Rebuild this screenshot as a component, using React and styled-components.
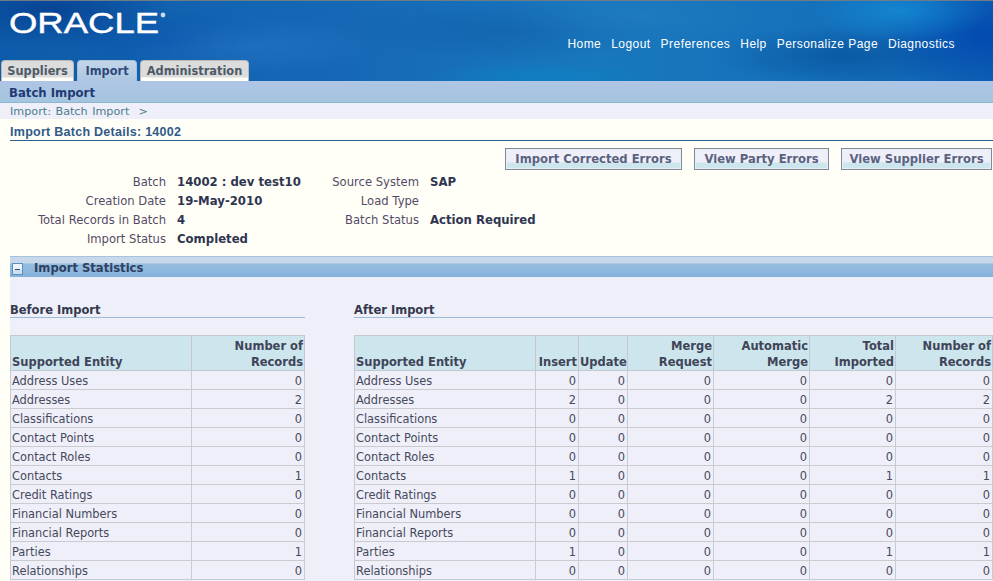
import React from "react";
import styled, { createGlobalStyle } from "styled-components";

const NAV = ["Home", "Logout", "Preferences", "Help", "Personalize Page", "Diagnostics"];
const TABS = [
    { label: "Suppliers", width: 73 },
    { label: "Import", width: 60 },
    { label: "Administration", width: 109 },
];
const ACTIONS = [
    { label: "Import Corrected Errors", width: 177 },
    { label: "View Party Errors", width: 135 },
    { label: "View Supplier Errors", width: 151 },
];
const FORM_LEFT = [
    ["Batch", "14002 : dev test10"],
    ["Creation Date", "19-May-2010"],
    ["Total Records in Batch", "4"],
    ["Import Status", "Completed"],
];
const FORM_RIGHT = [
    ["Source System", "SAP"],
    ["Load Type", ""],
    ["Batch Status", "Action Required"],
];
const ROWS = [
    ["Address Uses", 0, 0, 0, 0, 0, 0],
    ["Addresses", 2, 2, 0, 0, 0, 2, 2],
    ["Classifications", 0, 0, 0, 0, 0, 0, 0],
    ["Contact Points", 0, 0, 0, 0, 0, 0, 0],
    ["Contact Roles", 0, 0, 0, 0, 0, 0, 0],
    ["Contacts", 1, 1, 0, 0, 0, 1, 1],
    ["Credit Ratings", 0, 0, 0, 0, 0, 0, 0],
    ["Financial Numbers", 0, 0, 0, 0, 0, 0, 0],
    ["Financial Reports", 0, 0, 0, 0, 0, 0, 0],
    ["Parties", 1, 1, 0, 0, 0, 1, 1],
    ["Relationships", 0, 0, 0, 0, 0, 0, 0],
];
const AFTER_COLS = [
    { title: "Insert", width: 43 },
    { title: "Update", width: 49 },
    { title: ["Merge", "Request"], width: 86 },
    { title: ["Automatic", "Merge"], width: 96 },
    { title: ["Total", "Imported"], width: 86 },
    { title: ["Number of", "Records"], width: 97 },
];

const GlobalStyle = createGlobalStyle`
    html, body {
        margin: 0;
        height: 581px;
        overflow: hidden;
        background: #fffff8;
    }
    body {
        font-family: "DejaVu Sans", "Liberation Sans", sans-serif;
    }
`;

const Page = styled.div`
    width: 993px;
    height: 581px;
    overflow: hidden;
`;

const Header = styled.header`
    height: 81px;
    box-sizing: border-box;
    border-top: 1px solid #6f7b86;
    display: flex;
    flex-direction: column;
    background:
        radial-gradient(ellipse 120px 40px at 50px 8px, rgba(6, 60, 140, 0.75), transparent),
        radial-gradient(ellipse 130px 30px at 250px 45px, rgba(40, 120, 200, 0.55), transparent),
        radial-gradient(ellipse 120px 28px at 170px 38px, rgba(8, 80, 170, 0.6), transparent),
        radial-gradient(ellipse 90px 30px at 900px 10px, rgba(20, 140, 215, 0.8), transparent),
        radial-gradient(ellipse 110px 60px at 985px 35px, rgba(0, 70, 175, 0.85), transparent),
        radial-gradient(ellipse 130px 30px at 840px 55px, rgba(8, 85, 160, 0.8), transparent),
        radial-gradient(ellipse 120px 16px at 540px 76px, rgba(14, 130, 195, 0.8), transparent),
        radial-gradient(ellipse 130px 30px at 640px 15px, rgba(35, 125, 190, 0.6), transparent),
        radial-gradient(ellipse 170px 30px at 500px 30px, rgba(15, 90, 165, 0.45), transparent),
        linear-gradient(90deg, #0d5cab 0%, #1668b6 35%, #1877bd 60%, #1672bb 80%, #0f63b4 100%);
`;

const BrandRow = styled.div`
    display: flex;
    justify-content: space-between;
    flex: 1;
`;

const Logo = styled.svg`
    width: 160px;
    height: 36px;
    margin: 5px 0 0 9px;
`;

const Nav = styled.nav`
    display: flex;
    gap: 10px;
    margin: 35px 38px 0 0;
`;

const NavLink = styled.a`
    color: #fff;
    font: 12px/17px "Liberation Sans", Arial, sans-serif;
    letter-spacing: 0.45px;
`;

const TabRow = styled.div`
    display: flex;
    gap: 3px;
    padding-left: 1px;
    height: 21px;
`;

const Tab = styled.div`
    box-sizing: border-box;
    width: ${(p) => p.$width}px;
    height: 21px;
    padding-top: 3px;
    text-align: center;
    border: 1px solid ${(p) => (p.$active ? "#a9c0dc" : "#b9b9b9")};
    border-bottom: none;
    border-radius: 4px 4px 0 0;
    font-size: 11.4px;
    line-height: 15px;
    font-weight: bold;
    color: ${(p) => (p.$active ? "#2f4a78" : "#4e5a66")};
    background: ${(p) =>
        p.$active
            ? "linear-gradient(#c4d6e8, #aec6e2)"
            : "linear-gradient(#dcdcdc 0, #dcdcdc 16px, #fffff8 17px)"};
`;

const SectionBand = styled.div`
    height: 22px;
    box-sizing: border-box;
    padding: 5px 9px 0;
    font-size: 11.7px;
    line-height: 14px;
    font-weight: bold;
    color: #1f3a73;
    background: linear-gradient(#afc5e6, #a5c5de);
    border-bottom: 1px solid #8fb6cf;
`;

const Crumbs = styled.div`
    height: 16px;
    padding-left: 10px;
    background: #eeeff8;
    font-size: 11.2px;
    line-height: 18px;
    color: #4f7d8f;
    word-spacing: 1px;
`;

const Content = styled.div`
    padding-left: 10px;
`;

const PageTitle = styled.h1`
    margin: 0;
    height: 22px;
    box-sizing: border-box;
    padding-top: 6px;
    font: bold 12.5px/15px "Liberation Sans", Arial, sans-serif;
    letter-spacing: 0.27px;
    color: #2f5a88;
    border-bottom: 1px solid #2f5f8f;
`;

const Actions = styled.div`
    display: flex;
    justify-content: flex-end;
    gap: 12px;
    padding: 7px 1px 0 0;
`;

const ActionButton = styled.button`
    width: ${(p) => p.$width}px;
    height: 22px;
    padding: 0;
    border: 1px solid #808b9a;
    background: linear-gradient(#eeeff8 0, #eeeff8 13px, #cde5ed 14px);
    box-shadow: inset 0 0 0 1px #e9eef4;
    font-family: inherit;
    font-size: 11.6px;
    font-weight: bold;
    color: #5a6280;
`;

const Form = styled.div`
    display: flex;
    margin: 3px 0 0 -10px;
`;

const FormColumn = styled.dl`
    display: grid;
    grid-template-columns: ${(p) => p.$label}px ${(p) => p.$value};
    grid-auto-rows: 19px;
    column-gap: 11px;
    margin: 0;
`;

const FormLabel = styled.dt`
    font-size: 11.6px;
    line-height: 19px;
    text-align: right;
    color: #554a66;
    white-space: nowrap;
`;

const FormValue = styled.dd`
    margin: 0;
    font-size: 11.7px;
    line-height: 19px;
    font-weight: bold;
    color: #2f3550;
    white-space: nowrap;
`;

const StatsBar = styled.div`
    display: flex;
    align-items: flex-end;
    gap: 11px;
    height: 21px;
    margin-top: 7px;
    padding: 0 0 1px 2px;
    box-sizing: border-box;
    font-size: 11.6px;
    line-height: 15px;
    font-weight: bold;
    color: #2f4060;
    border-top: 1px solid #a8c4dc;
    background: linear-gradient(#c6d8e9 0, #c6d8e9 6px, #95bde0 7px, #85b2da 20px);

    svg {
        margin-bottom: 1px;
    }
`;

const StatsBody = styled.div`
    display: flex;
    gap: 49px;
    height: 304px;
    background: #eeeff8;
`;

const TableBlock = styled.section`
    flex: none;
    width: ${(p) => p.$width}px;
    padding-top: 25px;
`;

const BlockTitle = styled.h2`
    margin: 0 0 17px;
    height: 15px;
    font-size: 11.5px;
    line-height: 16px;
    font-weight: bold;
    color: #33384c;
    border-bottom: 1px solid #9dbbd6;
`;

const Table = styled.table`
    border-collapse: collapse;
    table-layout: fixed;
    width: 100%;
    font-size: 11.4px;
`;

const Th = styled.th`
    height: 35px;
    box-sizing: border-box;
    padding: 0 1px 0 1px;
    vertical-align: bottom;
    text-align: ${(p) => (p.$left ? "left" : "right")};
    font-size: 11.5px;
    line-height: 16px;
    font-weight: bold;
    color: #3f4458;
    white-space: nowrap;
    background: #cde5ed;
    border: 1px solid #c4c8cc;
`;

const Td = styled.td`
    height: 19px;
    box-sizing: border-box;
    padding: 2px 2px 0 1px;
    text-align: ${(p) => (p.$left ? "left" : "right")};
    color: #46495c;
    line-height: 16px;
    white-space: nowrap;
    border: 1px solid #c9cbce;
`;

const TitleLines = ({ title }) =>
    Array.isArray(title) ? (
        <>
            {title[0]}
            <br />
            {title[1]}
        </>
    ) : (
        title
    );

const MinusIcon = () => (
    <svg width="11" height="12" viewBox="0 0 11 12">
        <rect x="0.5" y="0.5" width="10" height="11" fill="#eef3f8" stroke="#5f8fbd" />
        <rect x="1" y="7" width="9" height="4" fill="#cfe0ee" />
        <path d="M3 6.5h5" stroke="#2c4f7c" strokeWidth="1" />
    </svg>
);

const App = () => {
    return (
        <Page>
            <GlobalStyle />
            <Header>
                <BrandRow>
                    <Logo viewBox="0 0 160 36">
                        <text
                            x="0"
                            y="27"
                            fill="#fff"
                            stroke="#fff"
                            strokeWidth="0.4"
                            fontFamily="'Liberation Sans', sans-serif"
                            fontSize="29"
                            textLength="150"
                            lengthAdjust="spacingAndGlyphs"
                        >
                            ORACLE
                        </text>
                        <circle cx="154" cy="9" r="2.4" fill="#c9d9ec" />
                    </Logo>
                    <Nav>
                        {NAV.map((item) => (
                            <NavLink key={item}>{item}</NavLink>
                        ))}
                    </Nav>
                </BrandRow>
                <TabRow>
                    {TABS.map((tab) => (
                        <Tab key={tab.label} $width={tab.width} $active={tab.label === "Import"}>
                            {tab.label}
                        </Tab>
                    ))}
                </TabRow>
            </Header>
            <SectionBand>Batch Import</SectionBand>
            <Crumbs>Import: Batch Import &nbsp;&gt;</Crumbs>
            <Content>
                <PageTitle>Import Batch Details: 14002</PageTitle>
                <Actions>
                    {ACTIONS.map((a) => (
                        <ActionButton key={a.label} $width={a.width}>
                            {a.label}
                        </ActionButton>
                    ))}
                </Actions>
                <Form>
                    <FormColumn $label={166} $value="125px">
                        {FORM_LEFT.map(([label, value]) => (
                            <React.Fragment key={label}>
                                <FormLabel>{label}</FormLabel>
                                <FormValue>{value}</FormValue>
                            </React.Fragment>
                        ))}
                    </FormColumn>
                    <FormColumn $label={117} $value="auto">
                        {FORM_RIGHT.map(([label, value]) => (
                            <React.Fragment key={label}>
                                <FormLabel>{label}</FormLabel>
                                <FormValue>{value}</FormValue>
                            </React.Fragment>
                        ))}
                    </FormColumn>
                </Form>
                <StatsBar>
                    <MinusIcon />
                    Import Statistics
                </StatsBar>
                <StatsBody>
                    <TableBlock $width={295}>
                        <BlockTitle>Before Import</BlockTitle>
                        <Table>
                            <colgroup>
                                <col width="181" />
                                <col width="113" />
                            </colgroup>
                            <thead>
                                <tr>
                                    <Th $left>Supported Entity</Th>
                                    <Th>
                                        <TitleLines title={["Number of", "Records"]} />
                                    </Th>
                                </tr>
                            </thead>
                            <tbody>
                                {ROWS.map((row) => (
                                    <tr key={row[0]}>
                                        <Td $left>{row[0]}</Td>
                                        <Td>{row[row.length - 1]}</Td>
                                    </tr>
                                ))}
                            </tbody>
                        </Table>
                    </TableBlock>
                    <TableBlock $width={639}>
                        <BlockTitle>After Import</BlockTitle>
                        <Table>
                            <colgroup>
                                <col width="181" />
                                {AFTER_COLS.map((c, i) => (
                                    <col key={i} width={c.width} />
                                ))}
                            </colgroup>
                            <thead>
                                <tr>
                                    <Th $left>Supported Entity</Th>
                                    {AFTER_COLS.map((c, i) => (
                                        <Th key={i}>
                                            <TitleLines title={c.title} />
                                        </Th>
                                    ))}
                                </tr>
                            </thead>
                            <tbody>
                                {ROWS.map((row) => (
                                    <tr key={row[0]}>
                                        <Td $left>{row[0]}</Td>
                                        <Td>{row[1]}</Td>
                                        <Td>0</Td>
                                        <Td>0</Td>
                                        <Td>0</Td>
                                        <Td>{row[row.length - 2]}</Td>
                                        <Td>{row[row.length - 1]}</Td>
                                    </tr>
                                ))}
                            </tbody>
                        </Table>
                    </TableBlock>
                </StatsBody>
            </Content>
        </Page>
    );
};

export default App;
